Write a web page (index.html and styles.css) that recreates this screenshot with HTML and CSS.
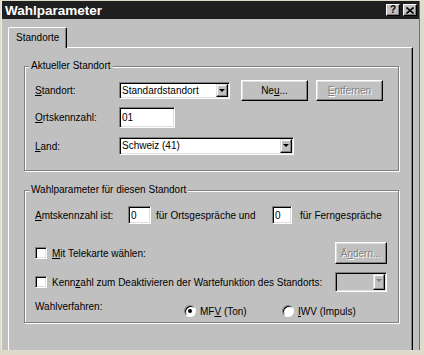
FILE: index.html
```html
<!DOCTYPE html>
<html>

<head>
    <title>Wahlparameter</title>
    <link rel="stylesheet" href="styles.css">
</head>

<body>
    <div class="window">
        <div class="titlebar">
            <span class="title">Wahlparameter</span>
            <span class="cap-btn">?</span>
            <span class="cap-btn">
                <svg width="8" height="7" viewBox="0 0 8 7"><path d="M0.5 0.5 L7.5 6.5 M7.5 0.5 L0.5 6.5" stroke="#000" stroke-width="1.6"/></svg>
            </span>
        </div>

        <div class="client">
            <div class="tab">Standorte</div>
            <div class="panel">

                <fieldset class="group group-location">
                    <legend>Aktueller Standort</legend>
                    <div class="row row-a">
                        <span class="lbl"><u>S</u>tandort:</span>
                        <div class="combo combo-standort"><span class="combo-text">Standardstandort</span><span class="drop"></span></div>
                        <div class="btn btn-new">Ne<u>u</u>...</div>
                        <div class="btn btn-remove disabled"><u>E</u>ntfernen</div>
                    </div>
                    <div class="row row-b">
                        <span class="lbl"><u>O</u>rtskennzahl:</span>
                        <div class="edit edit-code">01</div>
                    </div>
                    <div class="row row-c">
                        <span class="lbl"><u>L</u>and:</span>
                        <div class="combo combo-land"><span class="combo-text">Schweiz (41)</span><span class="drop"></span></div>
                    </div>
                </fieldset>

                <fieldset class="group group-dial">
                    <legend>Wahlparameter für diesen Standort</legend>
                    <div class="row row-1">
                        <span class="lbl lbl-wide"><u>A</u>mtskennzahl ist:</span>
                        <div class="edit edit-small">0</div>
                        <span class="txt-mid">für Ortsgespräche und</span>
                        <div class="edit edit-small2">0</div>
                        <span class="txt-end">für Ferngespräche</span>
                    </div>
                    <div class="row row-2">
                        <span class="check"></span>
                        <span><u>M</u>it Telekarte wählen:</span>
                        <div class="btn btn-change disabled">Ä<u>n</u>dern...</div>
                    </div>
                    <div class="row row-3">
                        <span class="check"></span>
                        <span>Kenn<u>z</u>ahl zum Deaktivieren der Wartefunktion des Standorts:</span>
                        <div class="combo combo-off"><span class="combo-text"></span><span class="drop drop-off"></span></div>
                    </div>
                    <div class="row row-4">
                        <span class="lbl lbl-method">Wahlverfahren:</span>
                        <span class="opt">
                            <span class="radio checked"></span>
                            <span>MF<u>V</u> (Ton)</span>
                        </span>
                        <span class="opt">
                            <span class="radio"></span>
                            <span><u>I</u>WV (Impuls)</span>
                        </span>
                    </div>
                </fieldset>

            </div>
        </div>
    </div>
</body>

</html>
```

FILE: styles.css
```css
* {
    box-sizing: border-box;
}

body {
    margin: 0;
    background-color: #dedbcd; /* light frame round the shot */
    font-family: "Liberation Sans", Arial, sans-serif;
    font-size: 10px;
    color: #000;
}

.window {
    margin: 1px 0 0 1px;
    width: 419px;
    height: 349px;
    background-color: #c0c0c0;
    border-left: 1px solid #ececec;
    border-right: 1px solid #707070;
    overflow: hidden;
}

/* title bar */
.titlebar {
    display: flex;
    align-items: center;
    height: 18px;
    padding: 0 2px 0 3px;
    background-color: #1f1f1f;
}

.title {
    flex: 1;
    color: #fff;
    font-weight: bold;
    font-size: 13.5px;
}

.cap-btn {
    display: flex;
    align-items: center;
    justify-content: center;
    width: 14px;
    height: 12px;
    margin-left: 3px;
    background-color: #c0c0c0;
    border: 1px solid;
    border-color: #fff #000 #000 #fff;
    box-shadow: inset -1px -1px #808080;
    font-weight: bold;
    font-size: 10px;
    line-height: 10px;
}

/* tab + page */
.client {
    padding: 8px 6px 0 6px;
}

.tab {
    position: relative;
    z-index: 1;
    width: 59px;
    height: 21px;
    margin-bottom: -1px;
    padding-left: 7px;
    line-height: 19px;
    background-color: #c0c0c0;
    border: 1px solid;
    border-bottom: none;
    border-color: #fff #000 #000 #fff;
    border-radius: 2px 2px 0 0;
    box-shadow: inset -1px 0 #808080;
}

.panel {
    height: 400px;
    padding: 12px 0 0 15px;
    border: 1px solid;
    border-color: #fff #000 #000 #fff;
    box-shadow: inset -1px 0 #808080;
}

/* group boxes */
.group {
    width: 375px;
    min-width: 0;
    margin: 0;
    padding: 8px 11px 15px 10px;
    border: 1px solid #808080;
    box-shadow: inset 1px 1px #fff, 1px 1px #fff;
}

.group legend {
    margin-left: -6px;
    padding: 0 2px;
    line-height: 12px;
    background-color: #c0c0c0;
}

.group-dial {
    margin-top: 13px;
    padding-top: 10px;
    padding-bottom: 2px;
}

.row {
    display: flex;
    align-items: center;
}

.lbl {
    width: 84px;
    flex-shrink: 0;
}

.row-a {
    height: 21px;
}

.row-b {
    height: 21px;
    margin-top: 6px;
}

.row-c {
    height: 18px;
    margin-top: 9px;
}

/* controls */
.edit,
.combo {
    background-color: #fff;
    border: 1px solid;
    border-color: #808080 #fff #fff #808080;
    box-shadow: inset 1px 1px #000, inset -1px -1px #dfdfdf;
}

.edit {
    padding-left: 2px;
    display: flex;
    align-items: center;
}

.edit-code {
    width: 56px;
    height: 21px;
}

.combo {
    display: flex;
    padding: 1px;
}

.combo-text {
    flex: 1;
    padding-left: 1px;
    line-height: 13px;
    white-space: nowrap;
}

.combo-land .combo-text {
    line-height: 14px;
}

.drop {
    position: relative;
    width: 12px;
    background-color: #c0c0c0;
    border: 1px solid;
    border-color: #dfdfdf #000 #000 #dfdfdf;
    box-shadow: inset -1px -1px #808080, inset 1px 1px #fff;
}

.drop::after {
    content: "";
    position: absolute;
    left: 2px;
    top: 4px;
    border-left: 3px solid transparent;
    border-right: 3px solid transparent;
    border-top: 3px solid #000;
}

.drop-off::after {
    border-top-color: #808080;
}

.combo-standort {
    width: 111px;
    height: 17px;
}

.combo-land {
    width: 175px;
    height: 18px;
}

.combo-off {
    width: 52px;
    height: 20px;
    margin-left: auto;
    background-color: #c0c0c0;
}

.btn {
    display: flex;
    align-items: center;
    justify-content: center;
    height: 21px;
    background-color: #c0c0c0;
    border: 1px solid;
    border-color: #fff #000 #000 #fff;
    box-shadow: inset -1px -1px #808080, inset 1px 1px #dfdfdf;
}

.btn-new {
    width: 67px;
    margin-left: 11px;
}

.btn-remove {
    width: 67px;
    margin-left: 8px;
}

.btn-change {
    width: 52px;
    height: 22px;
    margin-left: auto;
}

.disabled {
    color: #808080;
    text-shadow: 1px 1px 0 #fff;
}

/* second group rows */
.lbl-wide {
    width: 93px;
}

.row-1 {
    height: 18px;
}

.edit-small {
    width: 23px;
    height: 18px;
}

.edit-small2 {
    width: 20px;
    height: 18px;
}

.txt-mid {
    width: 121px;
    padding-left: 5px;
}

.txt-end {
    margin-left: 8px;
}

.row-2 {
    height: 22px;
    margin-top: 18px;
}

.row-3 {
    height: 20px;
    margin-top: 8px;
}

.check {
    width: 12px;
    height: 12px;
    margin-right: 5px;
    flex-shrink: 0;
    background-color: #fff;
    border: 1px solid;
    border-color: #808080 #fff #fff #808080;
    box-shadow: inset 1px 1px #000, inset -1px -1px #dfdfdf;
}

.row-4 {
    height: 18px;
    margin-top: 10px;
}

.lbl-method {
    width: 149px;
    align-self: flex-start;
    line-height: 10px;
}

.opt {
    display: flex;
    align-items: center;
    width: 98px;
}

.radio {
    position: relative;
    width: 12px;
    height: 12px;
    margin-right: 4px;
    border-radius: 50%;
    background-color: #fff;
    border: 1px solid;
    border-color: #808080 #fff #fff #808080;
    box-shadow: inset 1px 1px #000;
}

.radio.checked::after {
    content: "";
    position: absolute;
    left: 3px;
    top: 3px;
    width: 4px;
    height: 4px;
    border-radius: 50%;
    background-color: #000;
}
```
